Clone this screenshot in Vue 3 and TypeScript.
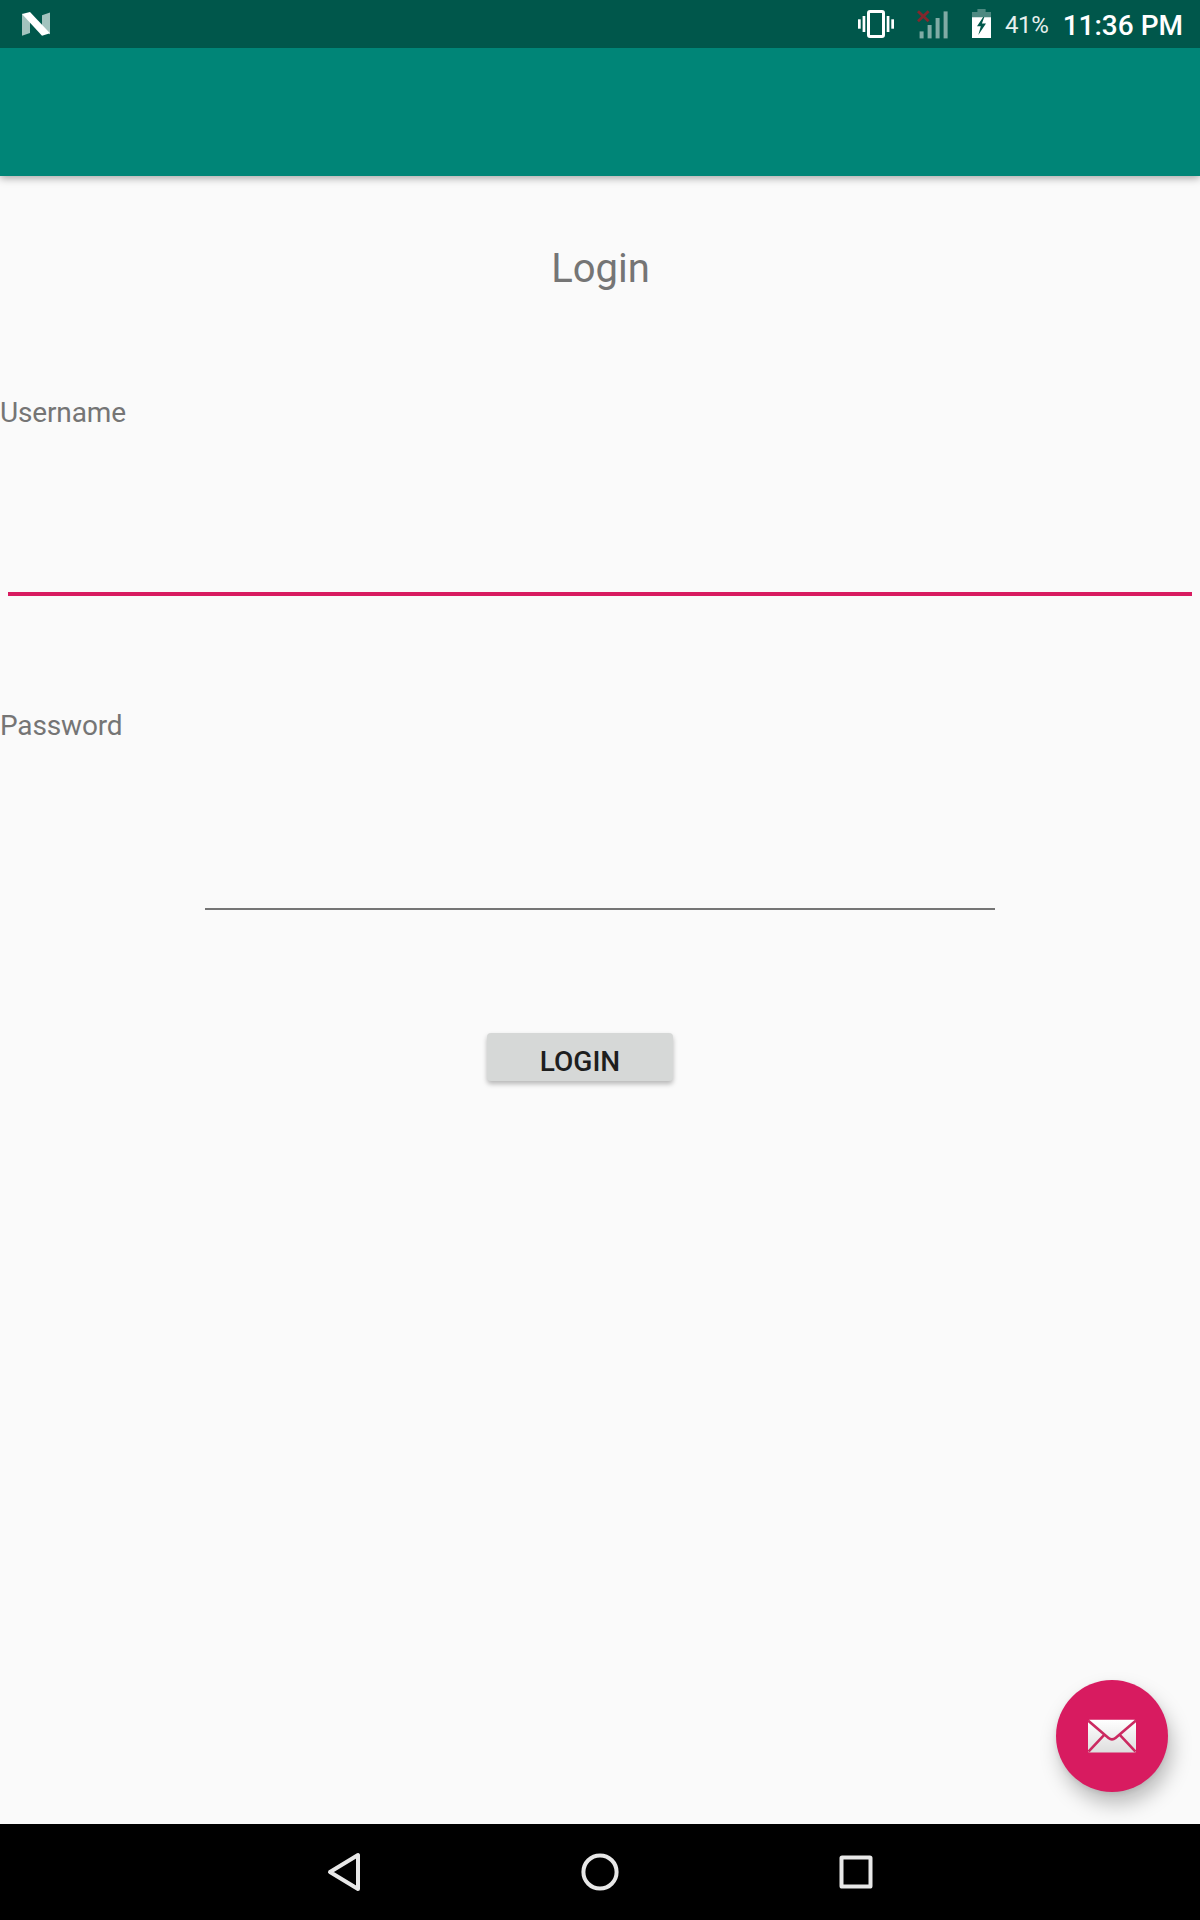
<script setup lang="ts">
import { ref } from 'vue'

const username = ref<string>('')
const password = ref<string>('')
const batteryLevel = '41%'
const clock = '11:36 PM'
</script>

<template>
  <div class="screen">
    <header class="status-bar">
      <svg class="n-logo" width="28" height="24" viewBox="0 0 28 24">
        <path d="M0 1.5V23.7L8 21V9z" fill="#a3c3be" />
        <path d="M28 .5V22.5L20 14V3.2z" fill="#a3c3be" />
        <path d="M0 2L8 0 28 21.3 20 23.7z" fill="#fff" />
      </svg>
      <div class="spacer"></div>
      <svg class="vibrate" width="36" height="28" viewBox="0 0 36 28" fill="#fff">
        <rect x="10.5" y="1.5" width="15" height="25" rx="1.5" fill="none" stroke="#fff" stroke-width="3" />
        <rect x="0" y="9.3" width="2.7" height="9.4" />
        <rect x="4.6" y="6" width="2.7" height="16" />
        <rect x="28.7" y="6" width="2.7" height="16" />
        <rect x="33.3" y="9.3" width="2.7" height="9.4" />
      </svg>
      <svg class="signal" width="31" height="29" viewBox="0 0 31 29">
        <g fill="#80aba5">
          <rect x="2.6" y="21.4" width="4" height="7" />
          <rect x="10.6" y="15" width="4" height="13.4" />
          <rect x="18.6" y="8" width="4" height="20.4" />
          <rect x="26.6" y="1.4" width="4" height="27" />
        </g>
        <path d="M1 1.2L11.6 11.2M11.6 1.2L1 11.2" stroke="#82282d" stroke-width="2.8" fill="none" />
      </svg>
      <svg class="battery" width="19" height="29" viewBox="0 0 19 29">
        <path d="M5.4 0H13.6V3H19V8.2H0V3H5.4z" fill="#4d8981" />
        <path d="M0 8.2H19V29H0z" fill="#fff" />
        <path d="M11.2 8L5 17.3H8.8L6.3 26 14 14.5H9.9L12.3 8z" fill="#00574b" />
      </svg>
      <span class="level">{{ batteryLevel }}</span>
      <span class="clock">{{ clock }}</span>
    </header>
    <div class="app-bar"></div>

    <main class="content">
      <h1 class="title">Login</h1>
      <label class="label" for="username">Username</label>
      <input id="username" v-model="username" class="field active" type="text" />
      <label class="label second" for="password">Password</label>
      <input id="password" v-model="password" class="field narrow" type="password" />
      <button class="submit" type="button">LOGIN</button>

      <button class="fab" type="button" aria-label="Mail">
        <svg width="48" height="34" viewBox="0 0 48 34">
          <defs>
            <linearGradient id="paper" x1="0" y1="0" x2="0" y2="1">
              <stop offset="0" stop-color="#fff" />
              <stop offset="1" stop-color="#dedede" />
            </linearGradient>
          </defs>
          <rect x="0" y="0.8" width="48" height="32.7" rx="1.5" fill="url(#paper)" />
          <path
            d="M0 1.5L20.5 18.9Q24 21.8 27.5 18.9L48 1.5M0.5 32.5L16.2 15.8M47.5 32.5L31.8 15.8"
            fill="none"
            stroke="#cb2a61"
            stroke-width="2.6"
          />
        </svg>
      </button>
    </main>

    <nav class="nav-bar">
      <svg width="40" height="40" viewBox="0 0 40 40">
        <path d="M34 3V37L6 20z" />
      </svg>
      <svg width="40" height="40" viewBox="0 0 40 40">
        <circle cx="20" cy="20" r="16.6" />
      </svg>
      <svg width="40" height="40" viewBox="0 0 40 40">
        <rect x="5.5" y="5.5" width="29" height="29" rx="0.6" />
      </svg>
    </nav>
  </div>
</template>

<style>
body {
  margin: 0;
}
</style>

<style scoped>
.screen {
  display: flex;
  flex-direction: column;
  width: 1200px;
  height: 1920px;
  overflow: hidden;
  background: #fafafa;
  font-family: Roboto, "Liberation Sans", sans-serif;
}
.status-bar {
  position: relative;
  z-index: 1;
  display: flex;
  align-items: flex-start;
  flex: 0 0 48px;
  box-sizing: border-box;
  padding: 0 17px 0 22px;
  background: #00574b;
  color: #fff;
  white-space: nowrap;
}
.n-logo {
  margin-top: 12px;
}
.spacer {
  flex: 1;
}
.vibrate {
  margin: 10px 23px 0 0;
}
.signal {
  margin: 10px 24px 0 0;
}
.battery {
  margin: 9px 14px 0 0;
}
.level {
  width: 57px;
  margin-top: 11px;
  font-size: 24px;
  line-height: 28px;
  letter-spacing: -0.4px;
  color: #e6efed;
}
.clock {
  width: 121px;
  margin-top: 9px;
  font-size: 28px;
  line-height: 33px;
  font-weight: 500;
  text-align: right;
}
.app-bar {
  flex: 0 0 128px;
  background: #008577;
  box-shadow: 0 2px 8px rgba(0, 0, 0, 0.36);
}
.content {
  position: relative;
  display: flex;
  flex-direction: column;
  flex: 1;
  padding-top: 69px;
}
.title {
  margin: 0 0 104px;
  padding-left: 1px;
  font-size: 40px;
  line-height: 47px;
  font-weight: 400;
  text-align: center;
  color: #757575;
}
.label {
  font-size: 28px;
  line-height: 33px;
  letter-spacing: -0.15px;
  color: #757575;
}
.label.second {
  margin-top: 113px;
}
.field {
  box-sizing: border-box;
  height: 168px;
  padding: 0;
  border: 0;
  border-bottom: 2px solid #757575;
  border-radius: 0;
  background: transparent;
  font: 400 36px Roboto, sans-serif;
  outline: none;
}
.field.active {
  height: 167px;
  margin: 0 8px;
  border-bottom: 4px solid #d81b60;
}
.field.narrow {
  margin: 0 205px;
}
.submit {
  width: 186px;
  height: 48px;
  margin: 123px 0 0 487px;
  padding: 12px 0 3px;
  border: 0;
  border-radius: 4px;
  background: #d6d8d7;
  box-shadow: 0 3px 5px rgba(0, 0, 0, 0.27);
  font: 500 28px/33px Roboto, sans-serif;
  color: #1e1e1e;
}
.fab {
  position: absolute;
  right: 32px;
  bottom: 32px;
  display: flex;
  align-items: center;
  justify-content: center;
  width: 112px;
  height: 112px;
  padding: 0;
  border: 0;
  border-radius: 50%;
  background: #d81b60;
  box-shadow: 4px 12px 20px rgba(0, 0, 0, 0.25), 0 2px 5px rgba(0, 0, 0, 0.08);
}
.nav-bar {
  display: flex;
  align-items: center;
  justify-content: space-between;
  flex: 0 0 96px;
  box-sizing: border-box;
  padding: 0 324px;
  background: #000;
}
.nav-bar svg {
  fill: none;
  stroke: #e8e8e8;
  stroke-width: 4;
  stroke-linejoin: round;
}
</style>
